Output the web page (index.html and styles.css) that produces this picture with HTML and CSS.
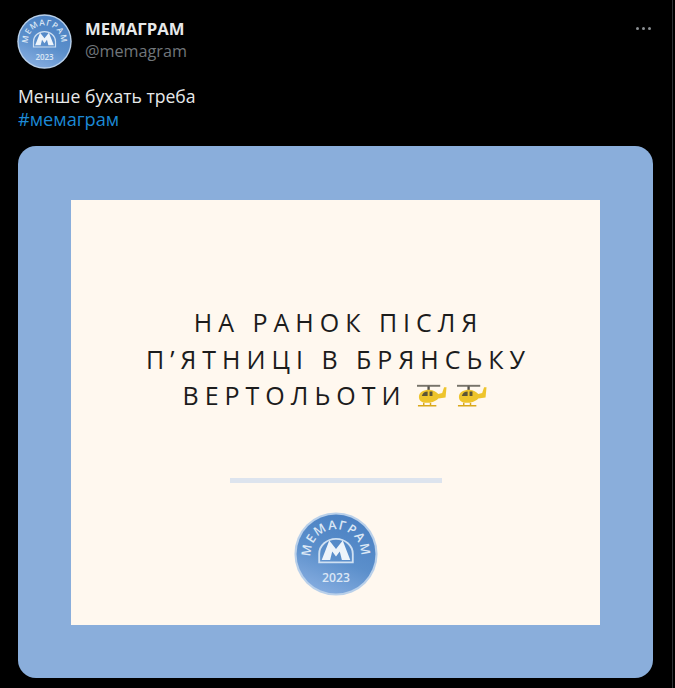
FILE: index.html
```html
<!DOCTYPE html>
<html lang="en">
<head>
    <meta charset="UTF-8">
    <meta name="viewport" content="width=device-width, initial-scale=1.0">
    <title>МЕМАГРАМ</title>
    <link rel="stylesheet" href="styles.css">
</head>
<body>
    <svg class="defs" width="0" height="0" aria-hidden="true">
        <defs>
            <linearGradient id="coin" x1="0.7" y1="0" x2="0.3" y2="1">
                <stop offset="0" stop-color="#4a80c2"/>
                <stop offset="0.55" stop-color="#5b8fcb"/>
                <stop offset="1" stop-color="#86ade0"/>
            </linearGradient>
            <path id="arc" d="M20.5 56 A30 30 0 1 1 79.5 56"/>
            <symbol id="logo" viewBox="0 0 100 100">
                <circle cx="50" cy="50" r="49.5" fill="#b9d0ea"/>
                <circle cx="50" cy="50" r="47" fill="url(#coin)"/>
                <text class="logo-arc"><textPath href="#arc" startOffset="50%" text-anchor="middle">МЕМАГРАМ</textPath></text>
                <path d="M30 60 V50 A20 18 0 0 1 70 50 V60 Z" fill="none" stroke="#cfe0f2" stroke-width="2.2"/>
                <path d="M33 57 L42 34 L50 44 L58 34 L67 57 L57 57 L54.5 47 L50 53 L45.5 47 L43 57 Z" fill="#eef4fa"/>
                <text class="logo-year" x="50" y="83" text-anchor="middle">2023</text>
            </symbol>
            <symbol id="heli" viewBox="0 0 32 24">
                <path d="M1 2.5 H25" stroke="#77736a" stroke-width="2"/>
                <path d="M13 3 V8" stroke="#55524c" stroke-width="2.4"/>
                <path d="M3 14 C3 9 8 6.5 14 6.5 C18 6.5 21 9 23 11 L27 10 L29 4 L31.5 4 L30.5 14.5 L23 15.5 C20 19 15 20 11 20 C6 20 3 18 3 14 Z" fill="#eec42c"/>
                <path d="M6 13 C7 10 9 8.5 12 8.5 L12 13 Z M14 8.5 L17 8.5 L17 13 L14 13 Z" fill="#5b5437"/>
                <path d="M2 23 H21 M8 20 V23 M15 20 V23" stroke="#d9a81c" stroke-width="1.5" fill="none"/>
            </symbol>
        </defs>
    </svg>

    <div class="tweet">
        <div class="head">
            <svg class="avatar"><use href="#logo"/></svg>
            <div class="names">
                <div class="name">МЕМАГРАМ</div>
                <div class="handle">@memagram</div>
            </div>
            <div class="more"><i></i><i></i><i></i></div>
        </div>

        <div class="text">
            <p>Менше бухать треба</p>
            <p class="tag">#мемаграм</p>
        </div>

        <div class="media">
            <div class="sheet">
                <div class="title">
                    <p class="shifted">НА РАНОК ПІСЛЯ</p>
                    <p class="shifted">П’ЯТНИЦІ В БРЯНСЬКУ</p>
                    <p class="last">ВЕРТОЛЬОТИ
                        <svg class="heli"><use href="#heli"/></svg>
                        <svg class="heli"><use href="#heli"/></svg>
                    </p>
                </div>
                <div class="rule"></div>
                <svg class="stamp"><use href="#logo"/></svg>
            </div>
        </div>
    </div>
</body>
</html>
```

FILE: styles.css
```css
html, body {
    margin: 0;
    background-color: #000;
}
body {
    font-family: "Open Sans", "Noto Sans", sans-serif;
}
p {
    margin: 0;
}
.defs {
    position: absolute;
}
.logo-arc {
    font-family: "Open Sans", sans-serif;
    font-size: 15px;
    font-weight: 600;
    letter-spacing: 1.6px;
    fill: #dbe7f5;
}
.logo-year {
    font-family: "Open Sans", sans-serif;
    font-size: 14.5px;
    font-weight: 600;
    fill: #dbe7f5;
}
.tweet {
    box-sizing: border-box;
    width: 673px;
    height: 688px;
    padding: 14px 19px 0 17px;
    border-right: 1px solid #2f3336;
    overflow: hidden;
}
.head {
    display: flex;
    align-items: flex-start;
}
.avatar {
    width: 55px;
    height: 55px;
    flex: none;
}
.names {
    margin-left: 13px;
    padding-top: 4px;
}
.name {
    color: #e7e9ea;
    font-size: 16.7px;
    font-weight: 700;
    line-height: 22px;
}
.handle {
    color: #71767b;
    font-size: 16.2px;
    line-height: 22px;
}
.more {
    display: flex;
    gap: 3px;
    margin-left: auto;
    margin-top: 13px;
    margin-right: 2px;
}
.more i {
    width: 3px;
    height: 3px;
    border-radius: 50%;
    background-color: #8b8f93;
}
.text {
    margin: 16px 0 15px 1px;
    color: #e7e9ea;
    font-size: 17.6px;
    line-height: 23px;
}
.tag {
    color: #1d8ad6;
    font-size: 18.2px;
}
.media {
    box-sizing: border-box;
    width: 635px;
    height: 532px;
    margin-left: 1px;
    padding: 54px 53px 53px 53px;
    background-color: #8aaedb;
    border-radius: 18px;
}
.sheet {
    display: flex;
    flex-direction: column;
    align-items: center;
    height: 100%;
    background-color: #fff8ef;
}
.title {
    margin-top: 104px;
    color: #1c1c1c;
    font-size: 25px;
    line-height: 36.5px;
    letter-spacing: 6px;
    text-align: center;
}
.shifted {
    padding-left: 6px;
}
.last {
    display: flex;
    align-items: center;
    justify-content: center;
    margin-left: -1px;
}
.heli {
    width: 31px;
    height: 24px;
    margin-left: 9px;
}
.heli:first-of-type {
    margin-left: 10px;
}
.rule {
    width: 212px;
    height: 5px;
    margin-top: 64px;
    background-color: #dde4ee;
}
.stamp {
    width: 84px;
    height: 84px;
    margin-top: 29px;
}
```
